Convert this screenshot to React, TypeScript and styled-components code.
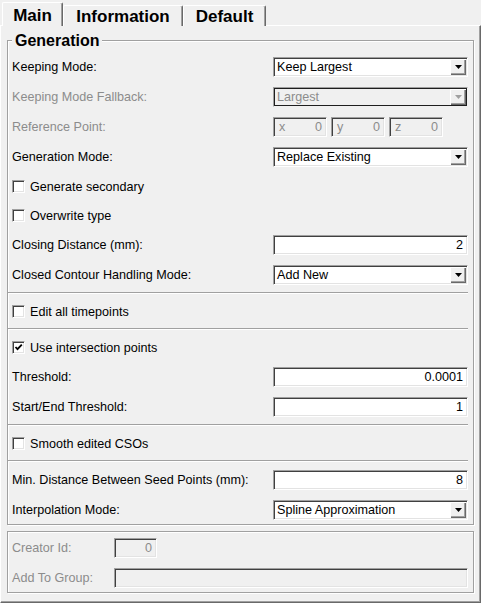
import React from 'react';
import styled, { createGlobalStyle, css } from 'styled-components';

const GlobalStyle = createGlobalStyle`
  html, body {
    margin: 0;
    padding: 0;
    background: #f0f0f0;
  }
  body {
    width: 481px;
    height: 603px;
    overflow: hidden;
    font-family: "Liberation Sans", Arial, sans-serif;
    font-size: 12.6px;
    color: #000;
  }
  * {
    box-sizing: border-box;
  }
`;

// classic windows sunken frame (edits, combos, checkboxes)
const sunken = css`
  border: 1px solid;
  border-color: #a0a0a0 #ffffff #ffffff #a0a0a0;
  box-shadow: inset 1px 1px 0 #404040, inset -1px -1px 0 #e3e3e3;
`;

// etched frame of a group box
const etched = css`
  border: 1px solid #a0a0a0;
  box-shadow: inset 1px 1px 0 #ffffff, 1px 1px 0 #ffffff;
`;

const Window = styled.div`
  display: flex;
  flex-direction: column;
  width: 481px;
  height: 603px;
`;

const TabBar = styled.div`
  display: flex;
  align-items: flex-end;
  height: 26px;
  padding-left: 2px;
  margin-bottom: -1px;
  position: relative;
  z-index: 1;
`;

const Tab = styled.div<{ $selected?: boolean; $width: number }>`
  width: ${(p) => p.$width}px;
  height: ${(p) => (p.$selected ? 24 : 21)}px;
  padding-top: ${(p) => (p.$selected ? 3 : 1)}px;
  text-align: center;
  font-weight: bold;
  font-size: 17px;
  line-height: 19px;
  background: #f0f0f0;
  border-top: 1px solid #ffffff;
  border-left: 1px solid #ffffff;
  border-right: 1px solid #696969;
  box-shadow: inset -1px 0 0 #a0a0a0;
  border-radius: 2px 2px 0 0;
`;

const Pane = styled.div`
  display: flex;
  flex-direction: column;
  height: 578px;
  border-top: 1px solid #ffffff;
  border-left: 1px solid #ffffff;
  border-right: 1px solid #696969;
  border-bottom: 1px solid #696969;
  box-shadow: inset -1px -1px 0 #a0a0a0;
  padding: 14px 6px 0 6px;
`;

const GroupBox = styled.div<{ $spaced?: boolean }>`
  ${etched};
  display: flex;
  flex-direction: column;
  padding: ${(p) => (p.$spaced ? '6px 5px 4px 4px' : '0 5px 4px 4px')};
  margin-top: ${(p) => (p.$spaced ? 6 : 0)}px;
`;

const GroupTitle = styled.div`
  align-self: flex-start;
  margin: -10px 0 7px 0;
  padding: 0 3px;
  background: #f0f0f0;
  font-weight: bold;
  font-size: 16px;
  line-height: 19px;
`;

const Section = styled.div`
  display: flex;
  flex-direction: column;
  gap: 10px;
`;

const Separator = styled.div`
  height: 2px;
  margin: 7px 0 8px -4px;
  border-top: 1px solid #a0a0a0;
  border-bottom: 1px solid #ffffff;
`;

const Row = styled.div<{ $label?: number }>`
  display: grid;
  grid-template-columns: ${(p) => (p.$label ? `${p.$label}px 1fr` : '1fr 195px')};
  align-items: center;
  height: 20px;
`;

const Label = styled.span<{ $disabled?: boolean }>`
  color: ${(p) => (p.$disabled ? '#8c8c8c' : '#000')};
  white-space: nowrap;
`;

const Combo = styled.div<{ $disabled?: boolean }>`
  ${sunken};
  display: flex;
  align-items: center;
  height: 20px;
  padding: 0 1px 0 3px;
  background: ${(p) => (p.$disabled ? '#f0f0f0' : '#ffffff')};
  color: ${(p) => (p.$disabled ? '#8c8c8c' : '#000')};
  ${(p) =>
    p.$disabled &&
    css`
      border-color: #a0a0a0 #f0f0f0 #f0f0f0 #a0a0a0;
      box-shadow: inset 1px 1px 0 #1e1e1e, inset -1px -1px 0 #1e1e1e;
    `}
`;

const ComboText = styled.span`
  flex: 1;
  line-height: 16px;
  white-space: nowrap;
`;

const ArrowButton = styled.div`
  display: flex;
  align-items: center;
  justify-content: center;
  width: 16px;
  height: 16px;
  background: #f0f0f0;
  box-shadow: inset 1px 1px 0 #ffffff, inset -1px -1px 0 #696969,
    inset -2px -2px 0 #a0a0a0;
`;

const Edit = styled.div<{ $disabled?: boolean; $width?: number }>`
  ${sunken};
  display: flex;
  align-items: center;
  justify-content: space-between;
  height: 20px;
  width: ${(p) => (p.$width ? `${p.$width}px` : '100%')};
  padding: 0 4px 0 5px;
  background: ${(p) => (p.$disabled ? '#f0f0f0' : '#ffffff')};
  color: ${(p) => (p.$disabled ? '#8c8c8c' : '#000')};
  line-height: 16px;
`;

const EditValue = styled.span`
  margin-left: auto;
`;

const VectorRow = styled.div`
  display: flex;
  gap: 4px;
`;

const CheckRow = styled.label`
  display: flex;
  align-items: center;
  gap: 5px;
  height: 19px;
`;

const CheckBox = styled.span`
  ${sunken};
  display: flex;
  align-items: center;
  justify-content: center;
  width: 13px;
  height: 13px;
  background: #ffffff;
`;

const Arrow: React.FC<{ disabled?: boolean }> = ({ disabled }) => (
  <ArrowButton>
    <svg width="7" height="4" viewBox="0 0 7 4">
      <polygon points="0,0 7,0 3.5,4" fill={disabled ? '#a0a0a0' : '#000'} />
    </svg>
  </ArrowButton>
);

const ComboBox: React.FC<{ value: string; disabled?: boolean }> = ({ value, disabled }) => (
  <Combo $disabled={disabled}>
    <ComboText>{value}</ComboText>
    <Arrow disabled={disabled} />
  </Combo>
);

const Check: React.FC<{ label: string; checked?: boolean }> = ({ label, checked }) => (
  <CheckRow>
    <CheckBox>
      {checked && (
        <svg width="9" height="9" viewBox="0 0 9 9">
          <polyline points="1.5,4 3.5,6.2 7.8,1.6" fill="none" stroke="#000" strokeWidth="1.8" />
        </svg>
      )}
    </CheckBox>
    <span>{label}</span>
  </CheckRow>
);

const LabeledCombo: React.FC<{ label: string; value: string; disabled?: boolean }> = ({
  label,
  value,
  disabled,
}) => (
  <Row>
    <Label $disabled={disabled}>{label}</Label>
    <ComboBox value={value} disabled={disabled} />
  </Row>
);

const LabeledEdit: React.FC<{ label: string; value: string }> = ({ label, value }) => (
  <Row>
    <Label>{label}</Label>
    <Edit>
      <EditValue>{value}</EditValue>
    </Edit>
  </Row>
);

const App: React.FC = () => {
  const axes = ['x', 'y', 'z'];

  return (
    <Window>
      <GlobalStyle />
      <TabBar>
        <Tab $selected $width={61}>Main</Tab>
        <Tab $width={120}>Information</Tab>
        <Tab $width={83}>Default</Tab>
      </TabBar>
      <Pane>
        <GroupBox>
          <GroupTitle>Generation</GroupTitle>
          <Section>
            <LabeledCombo label="Keeping Mode:" value="Keep Largest" />
            <LabeledCombo label="Keeping Mode Fallback:" value="Largest" disabled />
            <Row>
              <Label $disabled>Reference Point:</Label>
              <VectorRow>
                {axes.map((axis) => (
                  <Edit key={axis} $disabled $width={54}>
                    <span>{axis}</span>
                    <span>0</span>
                  </Edit>
                ))}
              </VectorRow>
            </Row>
            <LabeledCombo label="Generation Mode:" value="Replace Existing" />
            <Check label="Generate secondary" />
            <Check label="Overwrite type" />
            <LabeledEdit label="Closing Distance (mm):" value="2" />
            <LabeledCombo label="Closed Contour Handling Mode:" value="Add New" />
          </Section>
          <Separator />
          <Section>
            <Check label="Edit all timepoints" />
          </Section>
          <Separator />
          <Section>
            <Check label="Use intersection points" checked />
            <LabeledEdit label="Threshold:" value="0.0001" />
            <LabeledEdit label="Start/End Threshold:" value="1" />
          </Section>
          <Separator />
          <Section>
            <Check label="Smooth edited CSOs" />
          </Section>
          <Separator />
          <Section>
            <LabeledEdit label="Min. Distance Between Seed Points (mm):" value="8" />
            <LabeledCombo label="Interpolation Mode:" value="Spline Approximation" />
          </Section>
        </GroupBox>
        <GroupBox $spaced>
          <Section>
            <Row $label={102}>
              <Label $disabled>Creator Id:</Label>
              <Edit $disabled $width={43}>
                <EditValue>0</EditValue>
              </Edit>
            </Row>
            <Row $label={102}>
              <Label $disabled>Add To Group:</Label>
              <Edit $disabled />
            </Row>
          </Section>
        </GroupBox>
      </Pane>
    </Window>
  );
};

export default App;
